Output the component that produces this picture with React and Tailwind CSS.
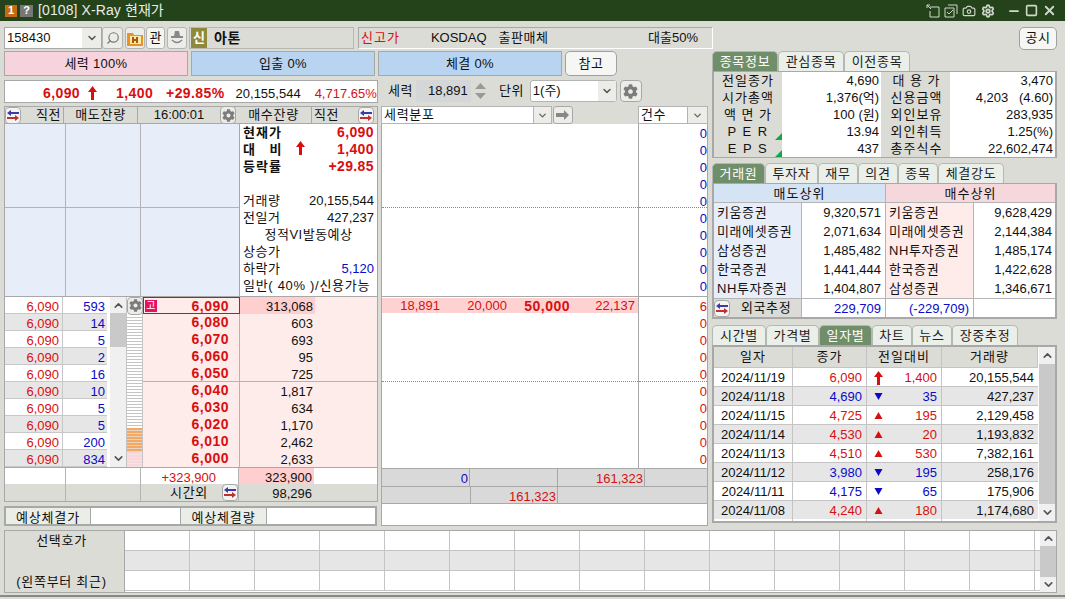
import { ChevronDown, ChevronUp, Minus, Square, X, Search, Camera, Settings } from 'lucide-react';
import { FaCog } from 'react-icons/fa';

const RED = 'text-[#d80f0f]';
const BLUE = 'text-[#0a0ac8]';

const asks = [
  ['6,090', '593'], ['6,090', '14'], ['6,090', '5'], ['6,090', '2'], ['6,090', '16'],
  ['6,090', '10'], ['6,090', '5'], ['6,090', '5'], ['6,090', '200'], ['6,090', '834'],
];
const bids = [
  ['6,090', '313,068'], ['6,080', '603'], ['6,070', '693'], ['6,060', '95'], ['6,050', '725'],
  ['6,040', '1,817'], ['6,030', '634'], ['6,020', '1,170'], ['6,010', '2,462'], ['6,000', '2,633'],
];
const infoRows = [
  ['전일종가', '4,690', '대 용 가', '3,470'],
  ['시가총액', '1,376(억)', '신용금액', '4,203   (4.60)'],
  ['액 면 가', '100 (원)', '외인보유', '283,935'],
  ['P E R', '13.94', '외인취득', '1.25(%)'],
  ['E P S', '437', '총주식수', '22,602,474'],
];
const brokers = [
  ['키움증권', '9,320,571', '키움증권', '9,628,429'],
  ['미래에셋증권', '2,071,634', '미래에셋증권', '2,144,384'],
  ['삼성증권', '1,485,482', 'NH투자증권', '1,485,174'],
  ['한국증권', '1,441,444', '한국증권', '1,422,628'],
  ['NH투자증권', '1,404,807', '삼성증권', '1,346,671'],
];
const daily = [
  ['2024/11/19', '6,090', 'big', '1,400', '20,155,544', 'r'],
  ['2024/11/18', '4,690', 'down', '35', '427,237', 'b'],
  ['2024/11/15', '4,725', 'up', '195', '2,129,458', 'r'],
  ['2024/11/14', '4,530', 'up', '20', '1,193,832', 'r'],
  ['2024/11/13', '4,510', 'up', '530', '7,382,161', 'r'],
  ['2024/11/12', '3,980', 'down', '195', '258,176', 'b'],
  ['2024/11/11', '4,175', 'down', '65', '175,906', 'b'],
  ['2024/11/08', '4,240', 'up', '180', '1,174,680', 'r'],
];

function UpArrow() {
  return (
    <svg width="9" height="14" viewBox="0 0 9 14" className="shrink-0">
      <path d="M4.5 0 9 6H6v8H3V6H0z" fill="#d80f0f" />
    </svg>
  );
}

function Tri({ dir }) {
  if (dir === 'big') return <UpArrow />;
  return (
    <svg width="9" height="9" viewBox="0 0 9 9" className="shrink-0">
      {dir === 'up' ? <path d="M4.5 1 8.5 8H.5z" fill="#d80f0f" /> : <path d="M.5 1h8L4.5 8z" fill="#0a0ac8" />}
    </svg>
  );
}

function SwapBtn() {
  return (
    <div className="flex h-[17px] w-[16px] shrink-0 items-center justify-center rounded-[4px] border border-[#a8a8a8] bg-[#f4f4f2]">
      <svg width="12" height="11" viewBox="0 0 12 11">
        <path d="M4 0v2h8v2H4v2L0 3z" fill="#3a3aa8" />
        <path d="M8 5v2H0v2h8v2l4-3z" fill="#c03030" />
      </svg>
    </div>
  );
}

function GearBtn() {
  return (
    <div className="flex h-[18px] w-[16px] shrink-0 items-center justify-center rounded-[4px] border border-[#a8a8a8] bg-[#ecece8]">
      <FaCog size={13} className="text-[#7c7c7c]" />
    </div>
  );
}

function Tabs({ items, active }) {
  return (
    <div className="flex h-[20px] items-end">
      {items.map(([name, w]) => (
        <div
          key={name}
          style={{ width: w }}
          className={`flex h-[20px] items-center justify-center rounded-t-[5px] border border-b-0 border-[#b4b8b0] text-[13px] tracking-[0.7px] ${name === active ? 'bg-[#6f8e69] text-white' : 'bg-[#ebefe9] text-[#222]'}`}
        >
          {name}
        </div>
      ))}
    </div>
  );
}

function OrderBook() {
  return (
    <div className="flex h-[396px] w-[374px] flex-col">
      <div className="flex h-[18px] items-center border border-[#a8a8a8] bg-[#dcdcd6]">
        <SwapBtn />
        <div className="w-[42px] pr-[2px] text-right tracking-[0.5px]">직전</div>
        <div className="flex h-full w-[75px] items-center justify-center border-x border-[#a8a8a8] tracking-[0.7px]">매도잔량</div>
        <div className="w-[82px] text-center">16:00:01</div>
        <GearBtn />
        <div className="flex h-full w-[75px] items-center justify-center tracking-[0.7px]">매수잔량</div>
        <div className="flex h-full w-[47px] items-center border-l border-[#a8a8a8] pl-[2px] tracking-[0.5px]">직전</div>
        <SwapBtn />
      </div>
      <div className="flex h-[172px] border-x border-[#a8a8a8]">
        <div className="grid h-full w-[234px] grid-cols-[61px_75px_1fr] grid-rows-[84px_1fr] bg-[#e8eef9]">
          {[0, 1, 2, 3, 4, 5].map(i => (
            <div key={i} className={`border-[#b4b4b4] ${i < 3 ? 'border-b' : ''} ${i % 3 !== 2 ? 'border-r' : ''}`} />
          ))}
        </div>
        <div className="flex flex-1 flex-col border-l border-[#a8a8a8] bg-white px-[3px] leading-[17px]">
          <div className="flex h-[17px] justify-between font-bold"><span className="tracking-[1px]">현재가</span><span className={`${RED} text-[14px] tracking-[0.4px]`}>6,090</span></div>
          <div className="flex h-[17px] items-center justify-between font-bold"><span className="flex w-[62px] justify-between"><span>대</span><span>비</span><UpArrow /></span><span className={`${RED} text-[14px] tracking-[0.4px]`}>1,400</span></div>
          <div className="flex h-[17px] justify-between font-bold"><span className="tracking-[1px]">등락률</span><span className={`${RED} text-[14px] tracking-[0.4px]`}>+29.85</span></div>
          <div className="h-[17px]" />
          <div className="flex h-[17px] justify-between"><span className="tracking-[0.6px]">거래량</span><span>20,155,544</span></div>
          <div className="flex h-[17px] justify-between"><span className="tracking-[0.6px]">전일거</span><span>427,237</span></div>
          <div className="h-[17px] text-center tracking-[0.5px]">정적VI발동예상</div>
          <div className="h-[17px] tracking-[0.6px]">상승가</div>
          <div className="flex h-[17px] justify-between"><span className="tracking-[0.6px]">하락가</span><span className={BLUE}>5,120</span></div>
          <div className="h-[17px] whitespace-nowrap tracking-[0.7px]">일반( 40% )/신용가능</div>
        </div>
      </div>
      <div className="flex h-[172px] border-x border-t border-[#a8a8a8] bg-white">
        <div className="w-[102px]">
          {asks.map(([p, v], i) => (
            <div key={i} className={`flex h-[17px] border-b border-[#c8c8c8] ${i % 2 ? 'bg-[#e6e6e6]' : 'bg-white'}`}>
              <div className={`w-[58px] border-r border-[#c8c8c8] pr-[3px] text-right ${RED}`}>{p}</div>
              <div className={`flex-1 pr-[2px] text-right ${BLUE}`}>{v}</div>
            </div>
          ))}
        </div>
        <div className="ml-[3px] flex w-[16px] flex-col items-center bg-[#f0f0f0]">
          <ChevronUp size={13} strokeWidth={3} className="mt-[2px] text-[#555]" />
          <div className="mt-[1px] h-[34px] w-full bg-[#c9c9c9]" />
          <div className="flex-1" />
          <ChevronDown size={13} strokeWidth={3} className="mb-[2px] text-[#555]" />
        </div>
        <div className="flex w-[17px] flex-col border-x border-[#c4c4c4]">
          <GearBtn />
          <div className="h-[113px] bg-[repeating-linear-gradient(to_bottom,#ffffff_0,#ffffff_2px,#c4c4c4_2px,#c4c4c4_3px)]" />
          <div className="h-[24px] bg-[repeating-linear-gradient(to_bottom,#f4a864_0,#f4a864_2px,#e8d4c0_2px,#e8d4c0_3px)]" />
          <div className="flex-1 bg-[repeating-linear-gradient(to_bottom,#fbd5da_0,#fbd5da_2px,#f0e4e6_2px,#f0e4e6_3px)]" />
        </div>
        <div className="flex-1 bg-[#feeceb]">
          {bids.map(([p, v], i) => (
            <div key={p} className={`flex h-[17px] ${i === 4 ? 'border-b border-[#b4b4b4]' : ''}`}>
              <div className={`relative w-[97px] shrink-0 border-r border-[#b4b4b4] pr-[10px] text-right text-[14px] font-bold leading-[17px] tracking-[0.5px] ${RED} ${i === 0 ? 'border border-[#b02020]' : ''}`}>
                {i === 0 && <span className="absolute left-[1px] top-[2px] flex h-[12px] w-[12px] items-center justify-center bg-[#ea1060] text-[10px] font-normal leading-none text-white">고</span>}
                {p}
              </div>
              <div className={`w-[75px] shrink-0 pr-[2px] text-right ${i === 0 ? 'bg-[#ffcfcf]' : ''}`}>{v}</div>
            </div>
          ))}
        </div>
      </div>
      <div className="flex h-[17px] border-x border-t border-[#a8a8a8] bg-white">
        <div className="w-[61px] border-r border-[#b4b4b4]" />
        <div className="w-[75px] border-r border-[#b4b4b4]" />
        <div className={`w-[98px] border-r border-[#b4b4b4] pr-[22px] text-right ${RED}`}>+323,900</div>
        <div className="w-[75px] bg-[#ffcfcf] pr-[2px] text-right">323,900</div>
      </div>
      <div className="flex h-[18px] border border-[#a8a8a8] border-t-0 bg-[#dcdcd6]">
        <div className="w-[61px] border-r border-[#b4b4b4]" />
        <div className="w-[75px] border-r border-[#b4b4b4]" />
        <div className="flex w-[98px] items-center border-r border-[#b4b4b4] pl-[29px]"><span className="w-[52px] tracking-[0.7px]">시간외</span><SwapBtn /></div>
        <div className="w-[75px] pr-[2px] text-right">98,296</div>
      </div>
    </div>
  );
}

function Distribution() {
  const upper = Array(10).fill('0');
  const lower = ['6', '0', '0', '0', '0', '0', '0', '0', '0', '0'];
  return (
    <div className="flex w-[327px] flex-col">
      <div className="flex h-[18px] items-center bg-[#dcdcd6]">
        <div className="flex h-full w-[171px] items-center justify-between border border-[#b4b4b4] bg-white">
          <span className="pl-[2px] tracking-[0.7px]">세력분포</span>
          <span className="flex h-full w-[18px] items-center justify-center border-l border-[#b4b4b4] bg-[#ecece8]"><ChevronDown size={11} strokeWidth={3} className="text-[#666]" /></span>
        </div>
        <div className="ml-[1px] flex h-full w-[20px] items-center justify-center rounded-[3px] border border-[#a8a8a8] bg-[#ecece8]">
          <svg width="14" height="10" viewBox="0 0 14 10"><path d="M0 3h8V0l5 5-5 5V7H0z" fill="#888" /></svg>
        </div>
        <div className="flex-1" />
        <div className="flex h-full w-[70px] items-center justify-between border border-[#b4b4b4] bg-white">
          <span className="pl-[2px] tracking-[0.5px]">건수</span>
          <span className="flex h-full w-[20px] items-center justify-center border-l border-[#b4b4b4] bg-[#ecece8]"><ChevronDown size={11} strokeWidth={3} className="text-[#666]" /></span>
        </div>
      </div>
      <div className="flex flex-col border-x border-b border-[#a8a8a8] bg-white">
        <div className="flex h-[172px]">
          <div className="w-[257px] border-r border-[#a8a8a8]">
            <div className="h-[84px] border-b border-dotted border-[#888]" />
          </div>
          <div className="relative flex-1">
            <div className="h-[84px] border-b border-dotted border-[#888]" />
            <div className="absolute inset-0 text-right">
              {upper.map((n, i) => <div key={i} className={`h-[17px] ${BLUE}`}>{n}</div>)}
            </div>
          </div>
        </div>
        <div className="flex h-[172px] border-t border-[#a8a8a8]">
          <div className="w-[257px] border-r border-[#a8a8a8]">
            <div className={`mt-[1px] flex h-[15px] items-center bg-[#ffd2d2] leading-none ${RED}`}>
              <span className="w-[58px] text-right">18,891</span>
              <span className="w-[67px] text-right">20,000</span>
              <span className="w-[63px] text-right text-[14px] font-bold tracking-[0.5px]">50,000</span>
              <span className="w-[65px] text-right">22,137</span>
            </div>
            <div className="mt-[68px] border-b border-dotted border-[#888]" />
          </div>
          <div className="relative flex-1">
            <div className="h-[85px] border-b border-dotted border-[#888]" />
            <div className="absolute inset-0 text-right">
              {lower.map((n, i) => <div key={i} className={`h-[17px] ${RED}`}>{n}</div>)}
            </div>
          </div>
        </div>
        <div className="flex h-[18px] border-t border-[#a8a8a8] bg-[#d9d9d9]">
          <div className={`w-[87px] pr-[1px] text-right ${BLUE}`}>0</div>
          <div className="w-[88px] border-l border-[#a8a8a8]" />
          <div className={`w-[88px] border-x border-[#a8a8a8] pr-[1px] text-right ${RED}`}>161,323</div>
        </div>
        <div className="flex h-[18px] border-y border-[#a8a8a8] bg-[#d9d9d9]">
          <div className="w-[88px]" />
          <div className={`w-[88px] border-x border-[#a8a8a8] pr-[1px] text-right ${RED}`}>161,323</div>
        </div>
        <div className="h-[21px]" />
      </div>
    </div>
  );
}

function StockInfo() {
  return (
    <div className="grid grid-cols-[68px_99px_69px_1fr] border-x-2 border-y border-[#a8a8a8] bg-white leading-[17px]">
      {infoRows.map(row => {
        const latin = row[0] === 'P E R' || row[0] === 'E P S';
        return (
          <div key={row[0]} className="contents">
            <div className={`relative h-[17px] whitespace-nowrap bg-[#dcdcd6] text-center ${latin ? 'tracking-[1.5px]' : 'tracking-[1px]'}`}>
              {row[0]}
              {latin && <span className="absolute bottom-0 right-0 h-0 w-0 border-b-[7px] border-l-[7px] border-b-[#12a84a] border-l-transparent" />}
            </div>
            <div className="pr-[2px] text-right">{row[1]}</div>
            <div className="bg-[#dcdcd6] pl-[2px] text-center tracking-[1px]">{row[2]}</div>
            <div className="whitespace-pre pr-[2px] text-right">{row[3]}</div>
          </div>
        );
      })}
    </div>
  );
}

function Brokers() {
  return (
    <div className="border-x-2 border-t border-b-2 border-[#a8a8a8] bg-white">
      <div className="flex h-[19px] border-b border-[#b4b4b4] text-center tracking-[1px]">
        <div className="w-[172px] border-r border-[#b4b4b4] bg-[#d4e4f4]">매도상위</div>
        <div className="flex-1 bg-[#f6d8dc]">매수상위</div>
      </div>
      {brokers.map(row => (
        <div key={row[0]} className="flex h-[19px] items-center">
          <div className="h-full w-[88px] whitespace-nowrap border-r border-[#b4b4b4] bg-[#e8eef9] pl-[3px] tracking-[0.6px]">{row[0]}</div>
          <div className="h-full w-[84px] border-r border-[#b4b4b4] pr-[4px] text-right">{row[1]}</div>
          <div className="h-full w-[88px] whitespace-nowrap border-r border-[#b4b4b4] bg-[#feeceb] pl-[3px] tracking-[0.6px]">{row[2]}</div>
          <div className="h-full flex-1 pr-[3px] text-right">{row[3]}</div>
        </div>
      ))}
      <div className="flex h-[19px] items-center border-t border-[#b4b4b4]">
        <div className="flex h-full w-[88px] items-center border-r border-[#b4b4b4] bg-[#dcdcd6]"><SwapBtn /><span className="pl-[11px] tracking-[0.6px]">외국추정</span></div>
        <div className={`h-full w-[84px] border-r border-[#b4b4b4] pr-[4px] text-right ${BLUE}`}>229,709</div>
        <div className={`h-full w-[88px] border-r border-[#b4b4b4] pr-[4px] text-right ${BLUE}`}>(-229,709)</div>
      </div>
    </div>
  );
}

function Daily() {
  return (
    <div className="flex h-[178px] border-2 border-[#a8a8a8] bg-white">
      <div className="w-[324px]">
        <div className="grid h-[20px] grid-cols-[79px_74px_75px_1fr] bg-[#dcdcd6] text-center tracking-[1px]">
          {['일자', '종가', '전일대비', '거래량'].map(h => <div key={h} className="border-r border-[#c4c4c4]">{h}</div>)}
        </div>
        {daily.map((r, i) => (
          <div key={r[0]} className={`grid h-[19px] grid-cols-[79px_74px_75px_1fr] border-t border-[#c4c4c4] ${i % 2 ? 'bg-[#e6e6e6]' : 'bg-white'}`}>
            <div className="border-r border-[#c4c4c4] text-center">{r[0]}</div>
            <div className={`border-r border-[#c4c4c4] pr-[4px] text-right ${r[5] === 'r' ? RED : BLUE}`}>{r[1]}</div>
            <div className={`flex items-center justify-between border-r border-[#c4c4c4] pl-[7px] pr-[4px] ${r[5] === 'r' ? RED : BLUE}`}><Tri dir={r[2]} /><span>{r[3]}</span></div>
            <div className="pr-[4px] text-right">{r[4]}</div>
          </div>
        ))}
      </div>
      <div className="ml-auto flex w-[16px] flex-col items-center bg-[#f0f0f0]">
        <ChevronUp size={13} strokeWidth={3} className="my-[2px] text-[#555]" />
        <div className="w-full flex-1 bg-[#c9c9c9]" />
        <ChevronDown size={13} strokeWidth={3} className="my-[2px] text-[#555]" />
      </div>
    </div>
  );
}

export default function App() {
  return (
    <div className="flex h-[599px] w-[1065px] flex-col overflow-hidden bg-[#dcdcd6] font-['Liberation_Sans','Noto_Sans_CJK_KR',sans-serif] text-[13px] text-[#111]">
      <div className="flex h-[21px] shrink-0 items-center bg-[#24431a] pl-[5px] pr-[8px] text-[14px] text-[#e8ece6]">
        <span className="flex h-[12px] w-[12px] items-center justify-center bg-[#c46a10] text-[11px] font-bold text-white">1</span>
        <span className="ml-[3px] flex h-[12px] w-[13px] items-center justify-center bg-[#777] text-[11px] font-bold text-white">?</span>
        <span className="ml-[5px] tracking-[0.1px]">[0108] X-Ray 현재가</span>
        <div className="ml-auto flex items-center gap-[4px] text-[#cfd8cb]">
          <svg width="14" height="14" viewBox="0 0 14 14" fill="none" stroke="currentColor"><path d="M4 3h9v10H4V7M1 1l4 4M1 4V1h3" /></svg>
          <svg width="14" height="14" viewBox="0 0 14 14" fill="none" stroke="currentColor"><path d="M4 1h9v9M1 4h9v9H1zM3 8l2 2 4-4" /></svg>
          <Camera size={14} />
          <Settings size={14} strokeWidth={3} className="ml-[1px]" />
          <Minus size={14} strokeWidth={3} className="ml-[8px]" />
          <Square size={13} strokeWidth={3} />
          <X size={15} strokeWidth={3} />
        </div>
      </div>

      <div className="flex h-[30px] shrink-0 items-center pl-[4px] pr-[8px] pt-[4px]">
        <div className="flex h-[22px] w-[98px] items-center justify-between border border-[#a8a8a8] bg-white pl-[2px]">
          158430
          <span className="flex h-full w-[19px] items-center justify-center bg-[#ecece8]"><ChevronDown size={12} strokeWidth={3} className="text-[#555]" /></span>
        </div>
        <div className="flex h-[22px] w-[21px] items-center justify-center rounded-[3px] border border-[#b4b4b4] bg-[#ecece8]"><Search size={14} className="-scale-x-100 text-[#777]" /></div>
        <div className="ml-[2px] flex h-[22px] w-[20px] items-center justify-center rounded-[3px] border border-[#b4b4b4] bg-[#ecece8]">
          <svg width="16" height="15" viewBox="0 0 16 15">
            <path d="M0 2h6l1 2h9v11H0z" fill="#e8922a" />
            <rect x="3" y="5" width="11" height="8" fill="#fbe8a8" />
            <path d="M5 6h2v2h2V6h2v6H9v-2H7v2H5z" fill="#a85c08" />
          </svg>
        </div>
        <div className="ml-[1px] flex h-[22px] w-[19px] items-center justify-center rounded-[3px] border border-[#b4b4b4] bg-[#f4f4f0]">관</div>
        <div className="ml-[2px] flex h-[22px] w-[20px] items-center justify-center rounded-[3px] border border-[#b4b4b4] bg-[#ecece8]">
          <svg width="14" height="16" viewBox="0 0 14 16"><path d="M5 1h4l1 5h3v2H1V6h3z" fill="#888" /><path d="M2 10q5 5 10 0" fill="none" stroke="#888" strokeWidth="1.500" /></svg>
        </div>
        <div className="ml-[2px] flex h-[22px] w-[165px] items-center border border-[#b8b8b4] pl-[1px]">
          <span className="flex h-[20px] w-[16px] items-center justify-center bg-[#8f8a3b] font-bold text-white">신</span>
          <span className="ml-[7px] text-[14px] font-bold tracking-[0.5px]">아톤</span>
        </div>
        <div className="relative ml-[4px] flex h-[22px] w-[355px] items-center border border-[#a8a8a8] border-b-white border-r-white pl-[2px]">
          <span className={`tracking-[1px] ${RED}`}>신고가</span>
          <span className="ml-[31px]">KOSDAQ</span>
          <span className="ml-[12px] tracking-[0.5px]">출판매체</span>
          <span className="absolute right-[14px]">대출50%</span>
        </div>
        <div className="ml-auto flex h-[23px] w-[38px] items-center justify-center rounded-[5px] border border-[#a0a0a0] bg-[#f6f6f4] tracking-[0.5px]">공시</div>
      </div>

      <div className="flex h-[478px] shrink-0 pl-[4px]">
        <div className="w-[708px] shrink-0">
          <div className="flex h-[25px] gap-[3px]">
            <div className="flex h-[25px] w-[184px] items-center justify-center border border-[#a8a8a8] bg-[#f6d3dd] tracking-[0.3px]">세력 100%</div>
            <div className="flex h-[25px] w-[184px] items-center justify-center border border-[#a8a8a8] bg-[#b8d4f0] tracking-[0.3px]">입출 0%</div>
            <div className="flex h-[25px] w-[184px] items-center justify-center border border-[#a8a8a8] bg-[#b8d4f0] tracking-[0.3px]">체결 0%</div>
            <div className="flex h-[25px] w-[52px] items-center justify-center rounded-[5px] border border-[#a0a0a0] bg-[#f6f6f4] tracking-[0.5px]">참고</div>
          </div>
          <div className="mt-[4px] flex h-[22px] items-center">
            <div className="flex h-[23px] w-[374px] items-end border border-[#a8a8a8] bg-white pb-[1px] pl-[38px] leading-[15px]">
              <span className={`text-[14px] font-bold tracking-[0.4px] ${RED}`}>6,090</span>
              <span className="ml-[8px] mr-[19px] mb-[1px]"><UpArrow /></span>
              <span className={`text-[14px] font-bold tracking-[0.4px] ${RED}`}>1,400</span>
              <span className={`ml-[13px] text-[14px] font-bold tracking-[0.4px] ${RED}`}>+29.85%</span>
              <span className="ml-[11px]">20,155,544</span>
              <span className={`ml-[14px] ${RED}`}>4,717.65%</span>
            </div>
            <span className="ml-[10px] tracking-[0.5px]">세력</span>
            <div className="ml-[3px] flex h-[22px] w-[74px] items-center justify-between rounded-[3px] bg-[#d4d6d8] pl-[12px]">
              18,891
              <span className="flex h-full w-[19px] flex-col items-center justify-center bg-[#dcdcd6]">
                <svg width="11" height="7" viewBox="0 0 11 7"><path d="M5.500 0 11 6H0z" fill="#999" /></svg>
                <svg width="11" height="7" viewBox="0 0 11 7" className="mt-[2px]"><path d="M0 1h11L5.500 7z" fill="#999" /></svg>
              </span>
            </div>
            <span className="ml-[9px] tracking-[0.5px]">단위</span>
            <div className="ml-[6px] flex h-[22px] w-[87px] items-center justify-between rounded-[3px] border border-[#b4b4b4] bg-white pl-[2px]">
              1(주)
              <span className="flex h-full w-[18px] items-center justify-center bg-[#ecece8]"><ChevronDown size={12} strokeWidth={3} className="text-[#555]" /></span>
            </div>
            <div className="ml-[3px] flex h-[22px] w-[22px] items-center justify-center rounded-[4px] border border-[#a8a8a8] bg-[#ecece8]"><FaCog size={15} className="text-[#7c7c7c]" /></div>
          </div>
          <div className="mt-[4px] flex gap-[3px]">
            <div className="flex flex-col">
              <OrderBook />
              <div className="mt-[4px] flex h-[20px] w-[373px] border-2 border-[#a8a8a8] bg-white">
                <div className="w-[84px] bg-[#eaeee6] text-center tracking-[0.8px]">예상체결가</div>
                <div className="w-[91px] border-x border-[#a8a8a8]" />
                <div className="w-[86px] border-r border-[#a8a8a8] bg-[#eaeee6] text-center tracking-[0.8px]">예상체결량</div>
              </div>
            </div>
            <Distribution />
          </div>
        </div>
        <div className="w-[345px] shrink-0">
          <Tabs items={[['종목정보', 66], ['관심종목', 66], ['이전종목', 66]]} active="종목정보" />
          <StockInfo />
          <div className="mt-[5px]">
            <Tabs items={[['거래원', 53], ['투자자', 53], ['재무', 40], ['의견', 40], ['종목', 40], ['체결강도', 66]]} active="거래원" />
            <Brokers />
          </div>
          <div className="mt-[6px]">
            <Tabs items={[['시간별', 54], ['가격별', 53], ['일자별', 53], ['차트', 40], ['뉴스', 40], ['장중추정', 66]]} active="일자별" />
            <Daily />
          </div>
        </div>
      </div>

      <div className="ml-[4px] mt-[1px] flex h-[63px] w-[1053px] shrink-0 border border-[#a8a8a8] bg-white">
        <div className="flex w-[120px] flex-col justify-between border-r border-[#a8a8a8] bg-[#dcdcd6] pb-[1px] pr-[6px] text-center tracking-[0.7px]">
          <span>선택호가</span>
          <span>(왼쪽부터 최근)</span>
        </div>
        <div className="flex-1">
          {[0, 1, 2].map(r => (
            <div key={r} className={`grid h-[20px] grid-cols-[repeat(14,65px)] border-b border-[#c4c4c4] ${r === 1 ? 'bg-[#e6e6e6]' : ''}`}>
              {Array.from({ length: 14 }, (_, i) => <div key={i} className="border-r border-[#c4c4c4]" />)}
            </div>
          ))}
        </div>
        <div className="flex w-[16px] flex-col items-center bg-[#f0f0f0]">
          <ChevronUp size={13} strokeWidth={3} className="my-[1px] text-[#555]" />
          <div className="w-full flex-1 bg-[#c9c9c9]" />
          <ChevronDown size={13} strokeWidth={3} className="my-[1px] text-[#555]" />
        </div>
      </div>
      <div className="mt-auto h-[4px] border-t-2 border-[#888]" />
    </div>
  );
}
